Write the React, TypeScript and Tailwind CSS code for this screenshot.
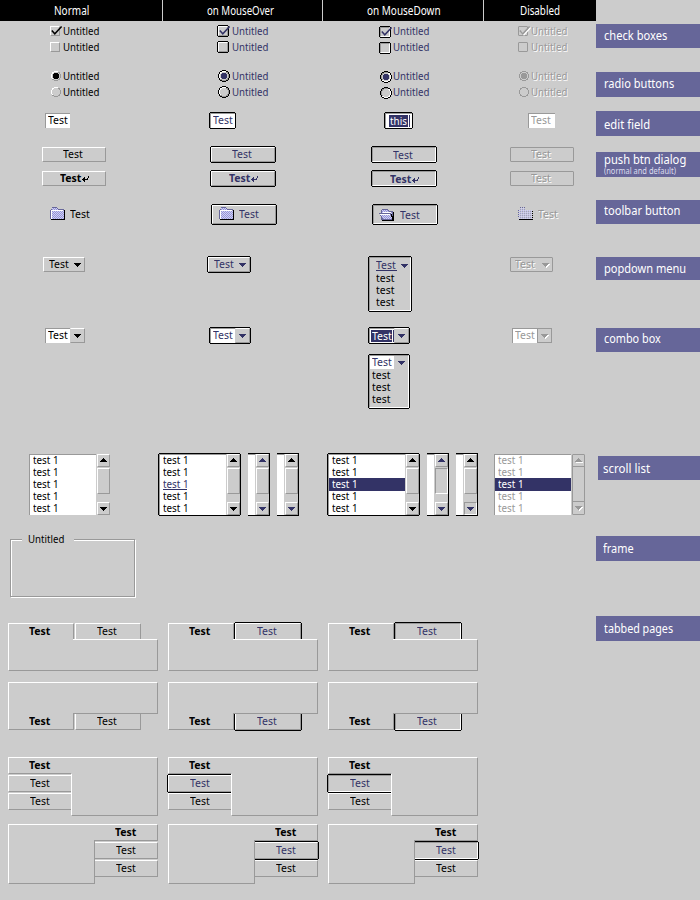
import React, { useLayoutEffect, useRef, useState } from "react";

const NAVY = "#333366";
const GRAY = "#999999";

const FONT = "font-['Noto_Sans','Open_Sans',sans-serif]";
const RAISED = "border border-t-white border-l-white border-r-[#999999] border-b-[#999999]";
const SUNKEN = "border border-t-[#999999] border-l-[#999999] border-r-white border-b-white";
const FLAT = "border border-[#999999] rounded-[1px]";
const RING = "shadow-[0_-1px_#000,0_1px_#000,1px_0_#000,-1px_0_#000]";
const EMBOSS = "[text-shadow:1px_1px_0_#fff]";

type Mode = "normal" | "over" | "down" | "off";
const MODES: Mode[] = ["normal", "over", "down", "off"];

const TONE: Record<Mode, string> = {
  normal: "text-black",
  over: "text-[#333366]",
  down: "text-[#333366]",
  off: "text-[#999999]",
};
const INK: Record<Mode, string> = { normal: "#000", over: NAVY, down: NAVY, off: GRAY };
const BUTTON: Record<Mode, string> = {
  normal: RAISED,
  over: RAISED + " " + RING,
  down: SUNKEN + " " + RING,
  off: FLAT,
};
const COLUMN: Record<Mode, string> = {
  normal: "w-[163px]",
  over: "w-[160px]",
  down: "w-[161px]",
  off: "w-[112px]",
};

/* Text condensed horizontally to a fixed advance width. */
function Txt({
  w,
  className = "",
  size = "text-[11px] leading-[12px] h-[12px]",
  children,
}: {
  w: number;
  className?: string;
  size?: string;
  children: string;
}) {
  const ref = useRef<HTMLSpanElement>(null);
  const [k, setK] = useState(1);
  useLayoutEffect(() => {
    if (ref.current) setK(w / ref.current.offsetWidth);
  }, [w]);
  return (
    <div className={`shrink-0 whitespace-nowrap ${size} ${className}`} style={{ width: w }}>
      <span ref={ref} className="inline-block origin-left" style={{ transform: `scaleX(${k})` }}>
        {children}
      </span>
    </div>
  );
}

/* Small bitmap glyph: one character per pixel. */
function Pixels({ rows, map, className = "" }: { rows: string[]; map: Record<string, string>; className?: string }) {
  const w = rows[0].length;
  return (
    <svg width={w} height={rows.length} shapeRendering="crispEdges" className={`block shrink-0 overflow-visible ${className}`}>
      {rows.flatMap((r, y) =>
        r.split("").map((c, x) => (map[c] ? <rect key={x + "-" + y} x={x} y={y} width={1} height={1} fill={map[c]} /> : null)),
      )}
    </svg>
  );
}

const DOWN = ["xxxxxxx", ".xxxxx.", "..xxx..", "...x..."];
const UP = ["...x...", "..xxx..", ".xxxxx.", "xxxxxxx"];
const DOWN_OFF = ["xxxxxxx.", ".xxxxxww", "..xxxww.", "...xww..", "....w..."];
const UP_OFF = ["...x....", "..xxx...", ".xxxxx..", "xxxxxxx.", ".wwwwwww"];

function Arrow({ mode, up = false, className = "" }: { mode: Mode; up?: boolean; className?: string }) {
  const rows = mode === "off" ? (up ? UP_OFF : DOWN_OFF) : up ? UP : DOWN;
  return <Pixels rows={rows} map={{ x: INK[mode], w: "#fff" }} className={className} />;
}

function Row({ className, cell }: { className: string; cell: (m: Mode) => React.ReactNode }) {
  return (
    <div className={`flex ${className}`}>
      {MODES.map((m) => (
        <div key={m} className={`flex shrink-0 flex-col items-start ${COLUMN[m]}`}>
          {cell(m)}
        </div>
      ))}
    </div>
  );
}

function CheckBox({ mode, checked }: { mode: Mode; checked: boolean }) {
  return (
    <div className={`relative h-[10px] w-[10px] shrink-0 ${BUTTON[mode]} ${mode === "down" ? "mt-px" : ""}`}>
      {checked && (
        <svg width="13" height="11" className="absolute -left-px -top-px overflow-visible" fill="none">
          {mode === "off" && <path d="M3 5.5 L6 8.5 L12.5 1.5" stroke="#fff" strokeWidth="1.6" />}
          <path d="M1.8 4.5 L4.8 7.8 L11.6 0.5" stroke={INK[mode]} strokeWidth="1.5" />
        </svg>
      )}
    </div>
  );
}

const DISC = [
  "...llll...",
  ".ll....dd.",
  ".l......d.",
  "l........d",
  "l........d",
  "l........d",
  "l........d",
  ".l......d.",
  ".dd....dd.",
  "...dddd...",
];
const DISC_RING = [
  "....kkkk....",
  "..kkllllkk..",
  ".kll....ddk.",
  ".kl......dk.",
  "kl........dk",
  "kl........dk",
  "kl........dk",
  "kl........dk",
  ".kl......dk.",
  ".kdd....ddk.",
  "..kkddddkk..",
  "....kkkk....",
];
const DOT = [".xxxx.", "xxxxxx", "xxxxxx", "xxxxxx", "xxxxxx", ".xxxx."];

function Radio({ mode, checked }: { mode: Mode; checked: boolean }) {
  const ringed = mode === "over" || mode === "down";
  const light = mode === "down" || mode === "off" ? GRAY : "#fff";
  const dark = mode === "down" ? "#fff" : GRAY;
  return (
    <div className={`relative h-[10px] w-[10px] shrink-0 ${mode === "down" ? "mt-px" : ""}`}>
      <Pixels
        rows={ringed ? DISC_RING : DISC}
        map={{ k: "#000", l: light, d: dark }}
        className={ringed ? "-ml-px -mt-px" : ""}
      />
      {checked && <Pixels rows={DOT} map={{ x: INK[mode] }} className="absolute left-[2px] top-[2px]" />}
    </div>
  );
}

const CHOICE_TXT: Record<Mode, string> = {
  normal: "-mt-px ml-[3px]",
  over: "-mt-px ml-[4px]",
  down: "-mt-px ml-[3px]",
  off: "-mt-px ml-[3px] " + EMBOSS,
};
const CHECK_PAD: Record<Mode, string> = { normal: "pl-[50px]", over: "pl-[55px]", down: "pl-[57px]", off: "pl-[34px]" };
const RADIO_PAD: Record<Mode, string> = { normal: "pl-[51px]", over: "pl-[56px]", down: "pl-[58px]", off: "pl-[35px]" };
const RADIO_TXT: Record<Mode, string> = {
  normal: "-mt-px ml-[2px]",
  over: "-mt-px ml-[3px]",
  down: "-mt-px ml-[2px]",
  off: "-mt-px ml-[2px] " + EMBOSS,
};

function Selected({ w, text, className = "" }: { w: number; text: string; className?: string }) {
  return (
    <div className={`flex h-[12px] bg-[#333366] pl-px text-white ${className}`}>
      <Txt w={w}>{text}</Txt>
    </div>
  );
}

function EditField({ mode }: { mode: Mode }) {
  const frame = "flex h-[15px] border-l border-t border-[#999999] bg-white";
  if (mode === "down")
    return (
      <div className={`ml-[62px] w-[27px] ${frame} ${RING}`}>
        <Selected w={17} text="this" className="ml-[3px] mt-px w-[19px]" />
        <div className="ml-px mt-px h-[12px] w-px bg-[#333366]" />
      </div>
    );
  const spot = mode === "normal" ? "ml-[45px] w-[25px]" : mode === "over" ? "ml-[47px] w-[25px] " + RING : "ml-[44px] w-[27px]";
  return (
    <div className={`${spot} ${frame} pl-[2px] ${TONE[mode]}`}>
      <Txt w={20}>Test</Txt>
    </div>
  );
}

const RETURN = ["......x", "..x...x", ".xx..x.", "xxxxxx.", ".xx....", "..x...."];
const PUSH_SPOT: Record<Mode, string> = { normal: "ml-[42px]", over: "ml-[48px]", down: "ml-[49px]", off: "ml-[26px]" };

function PushButton({ mode, isDefault }: { mode: Mode; isDefault: boolean }) {
  const bold = isDefault && mode !== "off";
  return (
    <div
      className={`flex h-[15px] w-[64px] shrink-0 ${PUSH_SPOT[mode]} ${BUTTON[mode]} ${TONE[mode]} ${mode === "down" ? "pt-px" : ""} ${
        bold ? "pl-[17px] font-bold" : "pl-[20px]"
      } ${mode === "off" ? EMBOSS : ""}`}
    >
      <Txt w={bold ? 21 : 20}>Test</Txt>
      {bold && <Pixels rows={RETURN} map={{ x: INK[mode] }} className="ml-px mt-[4px]" />}
    </div>
  );
}

function Folder({ mode }: { mode: Mode }) {
  const off = mode === "off";
  const id = "weave-" + mode;
  const edge = "#666699";
  return (
    <svg width="16" height="13" shapeRendering="crispEdges" className="block shrink-0">
      <defs>
        <pattern id={id} width="2" height="2" patternUnits="userSpaceOnUse">
          <rect width="2" height="2" fill={off ? "#cccccc" : "#ccccff"} />
          <rect width="1" height="1" fill="#9999cc" />
          <rect x="1" y="1" width="1" height="1" fill={off ? "#ccccff" : "#9999cc"} />
        </pattern>
      </defs>
      {mode === "down" ? (
        <>
          <path d="M2 2h1v-1h6v1h1v1h4v9h-12z" fill={edge} />
          <path d="M3 2h6v1h1v1h3v2h-10z" fill={`url(#${id})`} />
          <path d="M0 5h12v1h1v2h1v4h-11v-2h-1v-2h-1v-2h-1z" fill={edge} />
          <path d="M1 6h10v1h1v2h1v2h-9v-1h-1v-2h-1v-1h-1z" fill={`url(#${id})`} />
          <path d="M1 6h10v1h-10zM4 4h8v1h-8z" fill="#fff" />
          <path d="M12 6h1v2h1v-4h1v9h-12v-1h10v-3h-1z" fill="#000" />
        </>
      ) : (
        <>
          {!off && <path d="M0 3h1v-1h1v-2h5v1h1v1h6v10h-14z" fill={edge} />}
          <path d="M1 3h1v-2h5v1h1v1h6v9h-13z" fill={`url(#${id})`} />
          {off && <path d="M2 0h1v1h-1zM4 0h1v1h-1zM6 0h1v1h-1zM0 3h1v1h-1zM0 5h1v1h-1zM0 7h1v1h-1zM0 9h1v1h-1z" fill={edge} />}
          {!off && <path d="M1 3h12v1h-11v8h-1z" fill="#fff" />}
          {off ? (
            <path d="M1 12h14v1h-14zM14 4h1v1h-1zM14 6h1v1h-1zM14 8h1v1h-1zM14 10h1v1h-1z" fill="#000" />
          ) : (
            <path d="M1 12h13v-9h1v10h-14z" fill="#000" />
          )}
        </>
      )}
    </svg>
  );
}

function ToolButton({ mode }: { mode: Mode }) {
  const spot: Record<Mode, string> = {
    normal: "ml-[43px] border border-transparent pl-[6px]",
    over: "ml-[49px] pl-[6px] " + RAISED + " " + RING,
    down: "ml-[50px] pl-[5px] pt-px " + SUNKEN + " " + RING,
    off: "ml-[27px] border border-transparent pl-[6px] " + EMBOSS,
  };
  return (
    <div className={`flex h-[19px] w-[64px] ${spot[mode]} ${TONE[mode]}`}>
      <div className="mt-px">
        <Folder mode={mode} />
      </div>
      <Txt w={20} className={mode === "down" ? "ml-[5px] mt-[2px]" : "ml-[4px] mt-[2px]"}>
        Test
      </Txt>
    </div>
  );
}

function PopDown({ mode }: { mode: Mode }) {
  if (mode === "down")
    return (
      <div className={`ml-[46px] h-[54px] w-[42px] pl-[6px] pt-px ${SUNKEN} ${RING}`}>
        <div className="flex h-[13px] text-[#333366]">
          <div className="h-[12px] w-[21px] border-b border-[#333366]">
            <Txt w={20}>Test</Txt>
          </div>
          <Arrow mode="down" className="ml-[4px] mt-[5px]" />
        </div>
        {[0, 1, 2].map((i) => (
          <Txt key={i} w={18}>
            test
          </Txt>
        ))}
      </div>
    );
  const spot =
    mode === "normal" ? "ml-[43px] w-[42px] pl-[5px]" : mode === "over" ? "ml-[45px] w-[42px] pl-[5px]" : "ml-[26px] w-[43px] pl-[4px] " + EMBOSS;
  return (
    <div className={`flex h-[15px] ${spot} ${BUTTON[mode]} ${TONE[mode]}`}>
      <Txt w={20}>Test</Txt>
      <Arrow mode={mode} className={mode === "off" ? "ml-[7px] mt-[5px]" : "ml-[5px] mt-[5px]"} />
    </div>
  );
}

function Combo({ mode }: { mode: Mode }) {
  const spot: Record<Mode, string> = {
    normal: "ml-[45px]",
    over: "ml-[47px] " + RING,
    down: "ml-[46px] " + RING,
    off: "ml-[28px]",
  };
  return (
    <div className={`flex h-[15px] w-[40px] ${spot[mode]} ${TONE[mode]}`}>
      <div className="flex h-[15px] w-[25px] border-l border-t border-[#999999] bg-white">
        {mode === "down" ? (
          <>
            <Selected w={20} text="Test" className="ml-px mt-px w-[21px]" />
            <div className="ml-px mt-px h-[12px] w-px bg-[#333366]" />
          </>
        ) : (
          <Txt w={20} className="ml-[2px]">
            Test
          </Txt>
        )}
      </div>
      <div
        className={`h-[15px] w-[15px] border ${
          mode === "off" ? "border-[#999999]" : "border-b-[#999999] border-l-[#cccccc] border-r-[#999999] border-t-white"
        }`}
      >
        <Arrow mode={mode} className="ml-[3px] mt-[5px]" />
      </div>
    </div>
  );
}

function ComboOpen() {
  return (
    <div className={`ml-[46px] mt-[12px] h-[53px] w-[40px] ${SUNKEN} ${RING}`}>
      <div className="flex h-[13px]">
        <div className="w-[24px] bg-white pl-[2px] text-[#333366]">
          <Txt w={20}>Test</Txt>
        </div>
        <Arrow mode="down" className="ml-[4px] mt-[5px]" />
      </div>
      {[0, 1, 2].map((i) => (
        <Txt key={i} w={18} className="ml-[2px]">
          test
        </Txt>
      ))}
    </div>
  );
}

function ScrollBar({ up = "normal", down = "normal", thumb = RAISED, downFace = RAISED }: { up?: Mode; down?: Mode; thumb?: string; downFace?: string }) {
  if (up === "off")
    return (
      <div className="flex h-[61px] w-[13px] flex-col border border-[#999999] rounded-[1px]">
        <div className="h-[12px] border-b border-[#999999]">
          <Arrow mode="off" up className="ml-[2px] mt-[3px]" />
        </div>
        <div className="grow" />
        <div className="h-[13px] border-t border-[#999999]">
          <Arrow mode="off" className="ml-[2px] mt-[4px]" />
        </div>
      </div>
    );
  return (
    <div className="flex h-[61px] w-[13px] flex-col">
      <div className={`h-[13px] pl-[2px] pt-[3px] ${RAISED}`}>
        <Arrow mode={up} up />
      </div>
      <div className={`mt-px h-[26px] ${thumb}`} />
      <div className="grow" />
      <div className={`h-[13px] pl-[2px] pt-[4px] ${downFace}`}>
        <Arrow mode={down} />
      </div>
    </div>
  );
}

function MiniScroll({ className, children }: { className: string; children: React.ReactNode }) {
  return (
    <div className={`mt-[-1px] flex h-[63px] w-[22px] shrink-0 border-y border-r border-black ${className}`}>
      <div className="mr-px w-[7px] border-t border-[#999999] bg-white" />
      {children}
    </div>
  );
}

const LIST_SPOT: Record<Mode, string> = { normal: "ml-[29px]", over: "-ml-[4px] " + RING, down: "ml-[5px] " + RING, off: "ml-[10px]" };

function ScrollList({ mode }: { mode: Mode }) {
  const wide = mode === "down" || mode === "off";
  return (
    <div className={`flex h-[61px] shrink-0 ${LIST_SPOT[mode]} ${wide ? "w-[91px]" : "w-[81px]"}`}>
      <div
        className={`mr-px h-[61px] border-l border-[#999999] bg-white shadow-[inset_0_1px_#999999] ${wide ? "w-[77px]" : "w-[67px]"} ${
          mode === "off" ? "text-[#999999]" : "text-black"
        }`}
      >
        {[0, 1, 2, 3, 4].map((i) => {
          if (i === 2 && wide)
            return (
              <div key={i} className="-mb-px h-[13px] bg-[#333366] pl-[3px] text-white">
                <Txt w={26}>test 1</Txt>
              </div>
            );
          if (i === 2 && mode === "over")
            return (
              <div key={i} className="ml-[3px] h-[12px] w-[24px] border-b border-[#333366] text-[#333366]">
                <Txt w={26}>test 1</Txt>
              </div>
            );
          return (
            <Txt key={i} w={26} className="ml-[3px]">
              test 1
            </Txt>
          );
        })}
      </div>
      <ScrollBar up={mode === "off" ? "off" : "normal"} />
    </div>
  );
}

function Test({ bold = false, className, tone = "text-black" }: { bold?: boolean; className: string; tone?: string }) {
  return (
    <Txt w={bold ? 21 : 20} className={`${bold ? "font-bold" : ""} ${tone} ${className}`}>
      Test
    </Txt>
  );
}

function TabsTop({ mode }: { mode: Mode }) {
  const face =
    mode === "down" ? "border-t-[#999999] border-l-[#999999] border-r-white" : "border-t-white border-l-white border-r-[#999999]";
  const ring = mode === "normal" ? "" : "shadow-[0_-1px_#000,1px_0_#000,-1px_0_#000]";
  return (
    <div className="flex h-[48px] w-[150px] flex-col">
      <div className="flex h-[16px]">
        <div className="h-[16px] w-[66px] border-l border-r border-t border-l-white border-r-[#999999] border-t-white">
          <Test bold className="ml-[20px] mt-px" />
        </div>
        <div className={`ml-px h-[16px] w-[66px] border-l border-r border-t ${face} ${ring}`}>
          <Test className="ml-[21px] mt-px" tone={TONE[mode]} />
        </div>
      </div>
      <div className="relative flex h-[32px]">
        <div className="w-[65px] border-b border-l border-b-[#999999] border-l-white" />
        <div className="grow border-b border-r border-t border-b-[#999999] border-r-[#999999] border-t-white" />
      </div>
    </div>
  );
}

function TabsBottom({ mode }: { mode: Mode }) {
  const face =
    mode === "down" ? "border-b-white border-l-[#999999] border-r-white" : "border-b-[#999999] border-l-white border-r-[#999999]";
  const ring = mode === "normal" ? "" : "shadow-[0_1px_#000,1px_0_#000,-1px_0_#000]";
  return (
    <div className="flex h-[48px] w-[150px] flex-col">
      <div className="flex h-[32px]">
        <div className="w-[65px] border-l border-t border-white" />
        <div className="grow border-b border-r border-t border-b-[#999999] border-r-[#999999] border-t-white" />
      </div>
      <div className="flex h-[16px]">
        <div className="h-[16px] w-[66px] border-b border-l border-r border-b-[#999999] border-l-white border-r-[#999999]">
          <Test bold className="ml-[20px] mt-px" />
        </div>
        <div className={`ml-px h-[16px] w-[66px] border-b border-l border-r ${face} ${ring}`}>
          <Test className="ml-[21px] mt-px" tone={TONE[mode]} />
        </div>
      </div>
    </div>
  );
}

function TabsLeft({ mode }: { mode: Mode }) {
  const tab = "h-[17px] border-t border-l border-b";
  const plain = "border-t-white border-l-white border-b-[#999999]";
  const pressed = "border-t-[#999999] border-l-[#999999] border-b-white";
  const ring = mode === "normal" ? "" : "shadow-[0_-1px_#000,0_1px_#000,-1px_0_#000]";
  return (
    <div className="flex h-[59px] w-[150px]">
      <div className="flex w-[63px] flex-col gap-px">
        <div className={`${tab} ${plain}`}>
          <Test bold className="ml-[20px] mt-px" />
        </div>
        <div className={`${tab} ${mode === "down" ? pressed : plain} ${ring}`}>
          <Test className="ml-[21px] mt-px" tone={TONE[mode]} />
        </div>
        <div className={`${tab} ${plain}`}>
          <Test className="ml-[21px] mt-px" />
        </div>
      </div>
      <div className="flex grow flex-col">
        <div className="h-[17px] border-r border-t border-r-[#999999] border-t-white" />
        <div className="grow border-b border-l border-r border-b-[#999999] border-l-white border-r-[#999999]" />
      </div>
    </div>
  );
}

function TabsRight({ mode }: { mode: Mode }) {
  const tab = "h-[17px] border-t border-r border-b";
  const plain = "border-t-white border-r-[#999999] border-b-[#999999]";
  const pressed = "border-t-[#999999] border-r-white border-b-white";
  const ring = mode === "normal" ? "" : "shadow-[0_-1px_#000,0_1px_#000,1px_0_#000]";
  return (
    <div className="flex h-[60px] w-[150px]">
      <div className="flex w-[87px] flex-col">
        <div className="h-[16px] border-l border-t border-white" />
        <div className="grow border-b border-l border-r border-b-[#999999] border-l-white border-r-[#999999]" />
      </div>
      <div className="flex grow flex-col gap-px">
        <div className={`${tab} ${plain}`}>
          <Test bold className="ml-[20px] mt-px" />
        </div>
        <div className={`${tab} ${mode === "down" ? pressed : plain} ${ring}`}>
          <Test className="ml-[21px] mt-px" tone={TONE[mode]} />
        </div>
        <div className={`${tab} ${plain}`}>
          <Test className="ml-[21px] mt-px" />
        </div>
      </div>
    </div>
  );
}

const TAB_MODES: Mode[] = ["normal", "over", "down"];
const BIG = "text-[12px] leading-[16px] h-[16px]";

const SIDE: { text: string; w: number; box: string; note?: string }[] = [
  { text: "check boxes", w: 63, box: "mt-[24px] h-[24px] pl-[7.5px] pt-[4px]" },
  { text: "radio buttons", w: 70, box: "mt-[24px] h-[25px] pl-[7.5px] pt-[4px]" },
  { text: "edit field", w: 46, box: "mt-[14px] h-[25px] pl-[7.5px] pt-[6px]" },
  { text: "push btn dialog", w: 82, box: "mt-[16px] h-[25px] pl-[7.5px]", note: "(normal and default)" },
  { text: "toolbar button", w: 76, box: "mt-[23px] h-[24px] pl-[7.5px] pt-[3px]" },
  { text: "popdown menu", w: 82, box: "mt-[33px] h-[23px] pl-[7.5px] pt-[4px]" },
  { text: "combo box", w: 57, box: "mt-[48px] h-[24px] pl-[7.5px] pt-[3px]" },
  { text: "scroll list", w: 47, box: "ml-[2px] mt-[104px] h-[24px] pl-[5px] pt-[5px]" },
  { text: "frame", w: 31, box: "mt-[56px] h-[25px] pl-[7px] pt-[5px]" },
  { text: "tabbed pages", w: 69, box: "mt-[55px] h-[25px] pl-[8px] pt-[5px]" },
];

export default function App() {
  return (
    <div className={`flex h-[900px] w-[700px] overflow-hidden bg-[#cccccc] text-black ${FONT}`}>
      <div className="w-[596px] shrink-0">
        <div className="flex h-[21px] bg-black text-white">
          <div className="w-[163px] border-r border-[#cccccc] pl-[53.5px] pt-[3px]">
            <Txt w={35} size={BIG}>Normal</Txt>
          </div>
          <div className="w-[160px] border-r border-[#cccccc] pl-[43.5px] pt-[3px]">
            <Txt w={67} size={BIG}>on MouseOver</Txt>
          </div>
          <div className="w-[161px] border-r border-[#cccccc] pl-[43.5px] pt-[3px]">
            <Txt w={74} size={BIG}>on MouseDown</Txt>
          </div>
          <div className="w-[112px] pl-[35.5px] pt-[3px]">
            <Txt w={40} size={BIG}>Disabled</Txt>
          </div>
        </div>

        <Row
          className="h-[45px] pt-[5px]"
          cell={(m) =>
            [true, false].map((on) => (
              <div key={String(on)} className={`flex h-[16px] ${CHECK_PAD[m]} ${TONE[m]}`}>
                <CheckBox mode={m} checked={on} />
                <Txt w={36} className={CHOICE_TXT[m]}>Untitled</Txt>
              </div>
            ))
          }
        />
        <Row
          className="h-[40px] pt-[5px]"
          cell={(m) =>
            [true, false].map((on) => (
              <div key={String(on)} className={`flex h-[16px] ${RADIO_PAD[m]} ${TONE[m]}`}>
                <Radio mode={m} checked={on} />
                <Txt w={36} className={RADIO_TXT[m]}>Untitled</Txt>
              </div>
            ))
          }
        />
        <Row className="h-[35px] pt-[7px]" cell={(m) => <EditField mode={m} />} />
        <Row
          className="h-[56px] pt-[6px]"
          cell={(m) => (
            <div className="flex flex-col gap-[9px]">
              <PushButton mode={m} isDefault={false} />
              <PushButton mode={m} isDefault />
            </div>
          )}
        />
        <Row className="h-[52px] pt-[8px]" cell={(m) => <ToolButton mode={m} />} />
        <Row className="h-[71px] pt-[8px]" cell={(m) => <PopDown mode={m} />} />
        <Row
          className="h-[126px] pt-[8px]"
          cell={(m) => (
            <>
              <Combo mode={m} />
              {m === "down" && <ComboOpen />}
            </>
          )}
        />
        <Row
          className="h-[85px] pt-[8px]"
          cell={(m) => (
            <div className="flex">
              <ScrollList mode={m} />
              {m === "over" && (
                <>
                  <MiniScroll className="ml-[8px]">
                    <ScrollBar up="over" down="over" />
                  </MiniScroll>
                  <MiniScroll className="ml-[7px]">
                    <ScrollBar down="over" />
                  </MiniScroll>
                </>
              )}
              {m === "down" && (
                <>
                  <MiniScroll className="ml-[8px]">
                    <ScrollBar up="over" down="over" thumb={SUNKEN} />
                  </MiniScroll>
                  <MiniScroll className="ml-[7px]">
                    <ScrollBar down="over" downFace={SUNKEN} />
                  </MiniScroll>
                </>
              )}
            </div>
          )}
        />

        <div className="h-[92px] pl-[10px] pt-[8px]">
          <div className="h-[58px] w-[125px] border border-[#999999] shadow-[1px_1px_#fff,inset_1px_1px_#fff]">
            <div className="-mt-[7px] ml-[11px] flex h-[14px] w-[52px] bg-[#cccccc] pl-[6px]">
              <Txt w={36}>Untitled</Txt>
            </div>
          </div>
        </div>

        <div className="flex gap-[10px] pl-[8px]">{TAB_MODES.map((m) => <TabsTop key={m} mode={m} />)}</div>
        <div className="flex gap-[10px] pl-[8px] pt-[11px]">{TAB_MODES.map((m) => <TabsBottom key={m} mode={m} />)}</div>
        <div className="flex gap-[10px] pl-[8px] pt-[27px]">{TAB_MODES.map((m) => <TabsLeft key={m} mode={m} />)}</div>
        <div className="flex gap-[10px] pl-[8px] pt-[8px]">{TAB_MODES.map((m) => <TabsRight key={m} mode={m} />)}</div>
      </div>

      <div className="flex w-[104px] flex-col text-white">
        {SIDE.map((s) => (
          <div key={s.text} className={`shrink-0 bg-[#666699] ${s.box}`}>
            <Txt w={s.w} size={BIG}>{s.text}</Txt>
            {s.note && (
              <Txt w={72} size="text-[8px] leading-[8px] h-[8px]" className="-mt-px text-[#ddddee]">{s.note}</Txt>
            )}
          </div>
        ))}
      </div>
    </div>
  );
}
